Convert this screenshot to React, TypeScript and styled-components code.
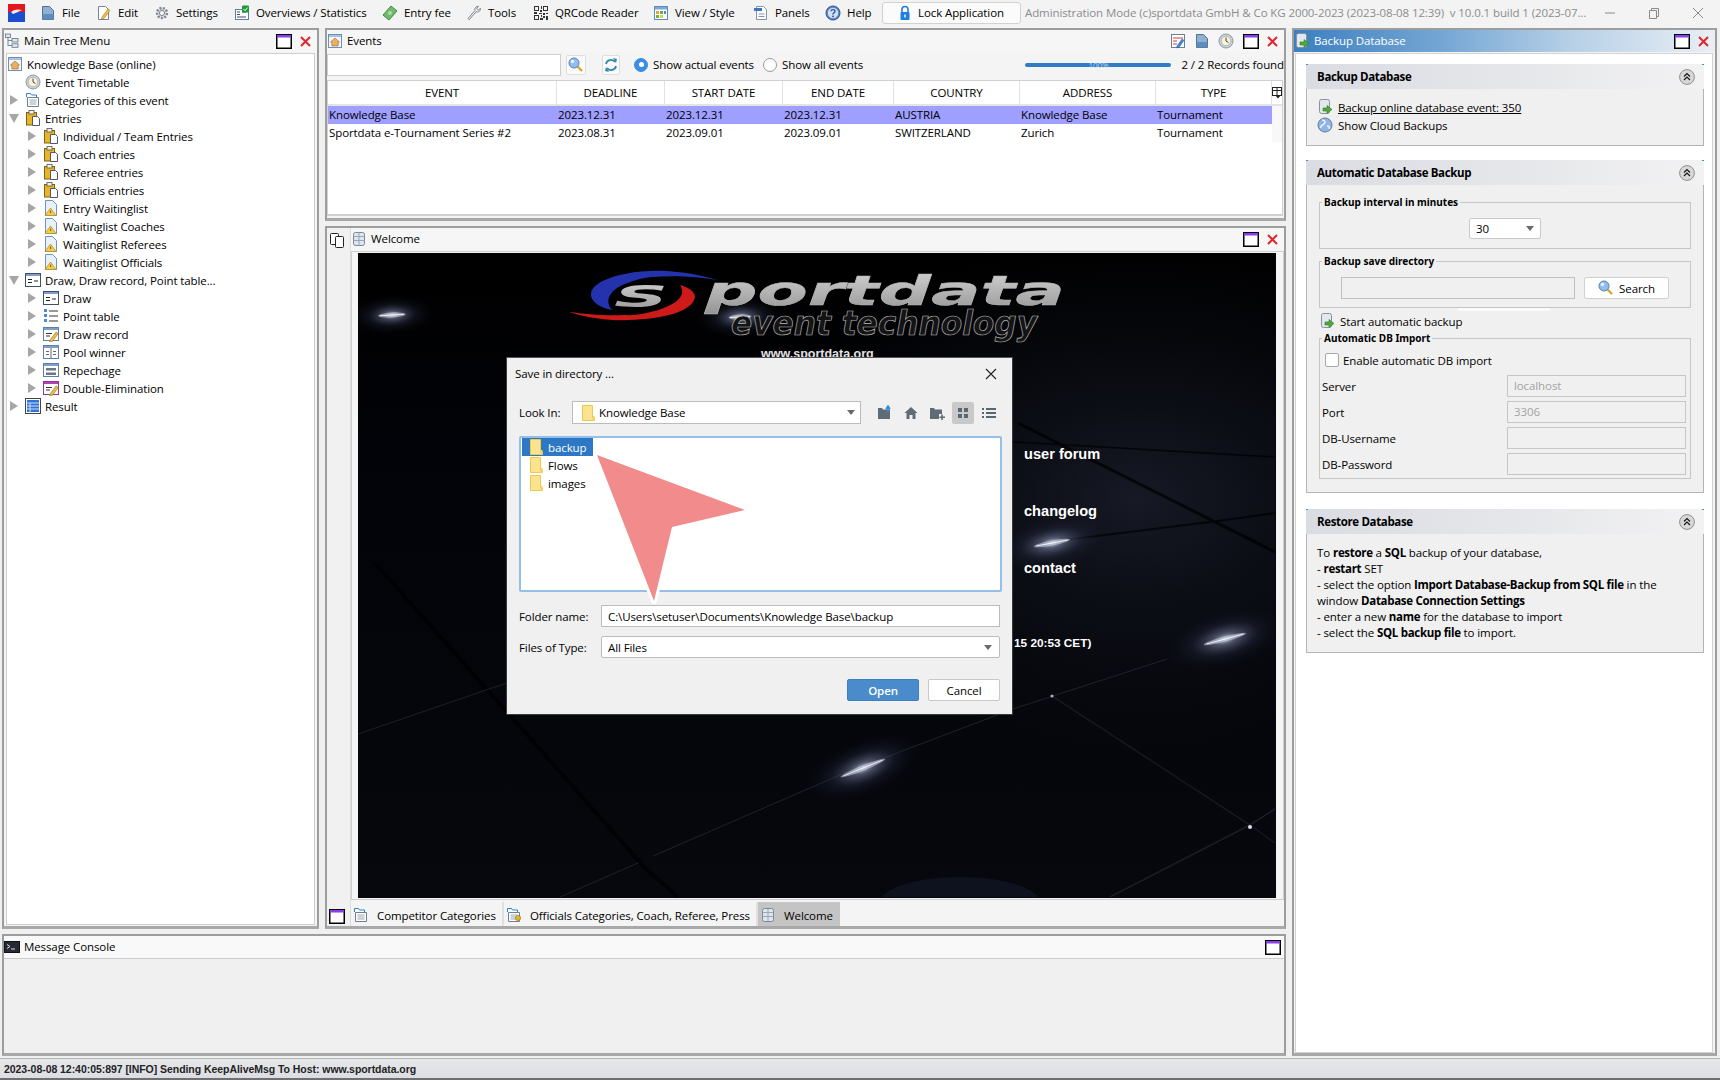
import React from 'react'
import styled, { createGlobalStyle } from 'styled-components'

const GlobalStyle = createGlobalStyle`
  html, body {
    margin: 0;
    padding: 0;
    background: #f0f0f0;
    overflow: hidden;
  }
  * {
    box-sizing: border-box;
  }
  svg {
    display: block;
    flex-shrink: 0;
  }
`

const UI_FONT = `'Open Sans', 'Noto Sans', sans-serif`
const TABLE_COLUMNS = '229px 108px 118px 111px 126px 136px 116px 1fr'

const Page = styled.div`
  position: relative;
  width: 1720px;
  height: 1080px;
  display: flex;
  flex-direction: column;
  background: #f0f0f0;
  font-family: ${UI_FONT};
  font-size: 11.5px;
  letter-spacing: -0.1px;
  color: #000;
  overflow: hidden;
`

/* ---------- top menu ---------- */

const TopBar = styled.div`
  height: 28px;
  flex: none;
  display: flex;
  align-items: center;
  padding: 0 0 3px 8px;
  background: #f3f3f3;
`

const AppMark = styled.div`
  width: 17px;
  margin-right: 15px;
`

const MenuItem = styled.div<{ $w: number }>`
  width: ${p => p.$w}px;
  display: flex;
  align-items: center;
  gap: 6px;
  white-space: nowrap;
`

const LockButton = styled.div`
  width: 139px;
  height: 22px;
  display: flex;
  align-items: center;
  justify-content: center;
  gap: 5px;
  padding-right: 2px;
  background: #fbfbfb;
  border: 1px solid #d2d2d2;
  border-radius: 3px;
`

const AppTitle = styled.div`
  width: 563px;
  margin-left: 4px;
  white-space: nowrap;
  overflow: hidden;
  color: #8c8c8c;
`

const WinControls = styled.div`
  margin-left: auto;
  display: flex;
`

const WinButton = styled.div`
  width: 44px;
  height: 24px;
  display: flex;
  align-items: center;
  justify-content: center;
  color: #8a8a8a;
`

/* ---------- workspace ---------- */

const Workspace = styled.div`
  flex: 1;
  display: grid;
  padding: 0 3px 2px 2px;
  grid-template-columns: 317px 961px 425px;
  grid-template-rows: 193px 703px 122px;
  grid-template-areas:
    'tree events right'
    'tree welcome right'
    'console console right';
  column-gap: 6px;
  row-gap: 5px;
`

const Panel = styled.section<{ $area: string }>`
  grid-area: ${p => p.$area};
  display: flex;
  flex-direction: column;
  min-width: 0;
  min-height: 0;
  border: 1px solid #9d9d9d;
  border-width: 2px 2px 3px 2px;
  border-bottom-color: #a8a8a8;
  background: #f4f4f4;
`

const PanelHead = styled.header<{ $active?: boolean }>`
  height: 22px;
  flex: none;
  display: flex;
  align-items: center;
  gap: 4px;
  padding: 0 6px 0 0;
  background: ${p =>
    p.$active
      ? 'linear-gradient(90deg, #3c7fc0 0%, #74a6d4 35%, #b5cfe6 65%, #e9eff5 100%)'
      : '#f6f6f6'};
  color: ${p => (p.$active ? '#fff' : '#000')};
`

const HeadTitle = styled.span`
  margin-bottom: 2px;
`

const HeadTools = styled.div`
  margin-left: auto;
  display: flex;
  align-items: center;
  gap: 8px;
`

const HeadIconGroup = styled.div`
  display: flex;
  align-items: center;
  gap: 8px;
  margin-right: 1px;
`

const TreeBody = styled.div`
  flex: 1;
  margin: 1px 2px 1px 2px;
  padding-top: 1px;
  background: #fff;
  border: 1px solid #cfcfcf;
`

const TreeRow = styled.div<{ $level: number }>`
  height: 18px;
  display: flex;
  align-items: center;
  padding-left: ${p => (p.$level === 0 ? 0 : 18 * (p.$level - 1))}px;
  white-space: nowrap;
`

const TreeArrowSlot = styled.div`
  width: 18px;
  display: flex;
  justify-content: center;
  padding-right: 5px;
`

const TreeArrow = styled.div<{ $open?: boolean }>`
  width: 0;
  height: 0;
  ${p =>
    p.$open
      ? `border-left: 5px solid transparent;
         border-right: 5px solid transparent;
         border-top: 9px solid #a6a6a6;`
      : `border-top: 5px solid transparent;
         border-bottom: 5px solid transparent;
         border-left: 8px solid #a6a6a6;`}
`

const TreeLabel = styled.span`
  margin-left: 4px;
`

/* ---------- events ---------- */

const FilterBar = styled.div`
  height: 28px;
  flex: none;
  display: flex;
  align-items: center;
  padding: 1px 0 4px 0;
`

const SearchInput = styled.div`
  width: 234px;
  height: 22px;
  background: #fff;
  border: 1px solid #cdcdcd;
`

const IconButton = styled.div<{ $gap: number; $w: number }>`
  width: ${p => p.$w}px;
  height: 20px;
  margin-left: ${p => p.$gap}px;
  display: flex;
  align-items: center;
  justify-content: center;
  background: #fbfbfb;
  border: 1px solid #dedede;
  border-radius: 2px;
`

const RadioLabel = styled.label<{ $w: number; $gap?: number }>`
  width: ${p => p.$w}px;
  margin-left: ${p => p.$gap ?? 0}px;
  display: flex;
  align-items: center;
  gap: 5px;
  white-space: nowrap;
`

const RadioDot = styled.span<{ $on?: boolean }>`
  width: 14px;
  height: 14px;
  flex: none;
  border-radius: 50%;
  display: flex;
  align-items: center;
  justify-content: center;
  background: ${p => (p.$on ? '#3c8ee2' : '#fff')};
  border: 1px solid ${p => (p.$on ? '#3c8ee2' : '#9a9a9a')};
  &::after {
    content: '';
    width: 5px;
    height: 5px;
    border-radius: 50%;
    background: #fff;
    display: ${p => (p.$on ? 'block' : 'none')};
  }
`

const Progress = styled.div`
  width: 146px;
  height: 4px;
  margin-left: auto;
  display: flex;
  align-items: center;
  justify-content: center;
  border-radius: 2px;
  background: #2f7dc6;
  color: #b9d5ee;
  font-size: 8px;
  line-height: 4px;
`

const RecordCount = styled.span`
  margin-left: 10px;
  white-space: nowrap;
`

const TableBox = styled.div`
  flex: 1;
  margin: 0 1px 2px 0;
  background: #fff;
  border: 1px solid #d0d0d0;
  border-bottom-width: 2px;
`

const TableHead = styled.div`
  height: 25px;
  display: grid;
  grid-template-columns: ${TABLE_COLUMNS};
  border-bottom: 2px solid #e4e4e4;
`

const HeadCell = styled.div`
  display: flex;
  align-items: center;
  justify-content: center;
  border-right: 1px solid #e2e2e2;
  &:last-child {
    border-right: 0;
    align-items: flex-start;
    padding-top: 6px;
  }
`

const TableRow = styled.div<{ $selected?: boolean }>`
  height: 18px;
  display: grid;
  grid-template-columns: ${TABLE_COLUMNS};
  align-items: center;
`

const Cell = styled.div<{ $selected?: boolean }>`
  height: 18px;
  line-height: 18px;
  padding-left: 1px;
  white-space: nowrap;
  background: ${p => (p.$selected ? '#9f9fff' : 'transparent')};
  &:last-child {
    background: #f8f8f8;
  }
`

/* ---------- welcome ---------- */

const WelcomeBox = styled.div`
  flex: 1;
  display: flex;
  min-height: 0;
`

const SideStrip = styled.div`
  width: 23px;
  flex: none;
  display: flex;
  flex-direction: column;
  justify-content: space-between;
  align-items: center;
  padding: 4px 3px 2px 0;
  background: #f1f1f1;
`

const WelcomeMain = styled.div`
  flex: 1;
  min-width: 0;
  display: flex;
  flex-direction: column;
  border-left: 1px solid #dcdcdc;
`

const ImageFrame = styled.div`
  flex: 1;
  min-height: 0;
  margin-top: 1px;
  padding: 1px 7px 1px 6px;
  background: #f5f5f5;
  border: 1px solid #cfcfcf;
`

const SplashImage = styled.div`
  position: relative;
  height: 100%;
  padding-top: 16px;
  overflow: hidden;
  background: #05060a;
  color: #fff;
  font-family: 'Liberation Sans', Arial, sans-serif;
  font-weight: bold;
  letter-spacing: 0;
`

const Backdrop = styled.svg`
  position: absolute;
  inset: 0;
`

const LogoHolder = styled.div`
  position: relative;
  height: 78px;
  margin-left: 207px;
`

const SiteLink = styled.div`
  position: relative;
  height: 14px;
  line-height: 14px;
  margin-left: 403px;
  font-size: 12.5px;
  color: #e4e4e4;
`

const LinkColumn = styled.div`
  position: relative;
  margin: 84px 0 0 666px;
  display: flex;
  flex-direction: column;
  gap: 39px;
  font-size: 14.6px;
  line-height: 18px;
`

const BuildNote = styled.div`
  position: relative;
  margin: 58px 0 0 656px;
  font-size: 11.8px;
  line-height: 16px;
`

const TabStrip = styled.div`
  height: 26px;
  flex: none;
  display: flex;
  align-items: center;
  padding-top: 2px;
  background: #f4f4f4;
`

const Tab = styled.div<{ $w: number; $active?: boolean }>`
  width: ${p => p.$w}px;
  height: 24px;
  flex: none;
  display: flex;
  align-items: center;
  gap: 8px;
  padding: 2px 0 0 2px;
  white-space: nowrap;
  background: ${p => (p.$active ? '#c4c4c4' : 'transparent')};
  border-right: ${p => (p.$active ? '0' : '2px solid #e0e0e0')};
`

/* ---------- console ---------- */

const ConsoleBody = styled.div`
  flex: 1;
  background: #f0f0f0;
  border-top: 1px solid #cbcbcb;
`

const ConsoleHead = styled(PanelHead)`
  background: #f9f9f9;
  padding-right: 3px;
`

/* ---------- backup side ---------- */

const BackupBody = styled.div`
  flex: 1;
  margin: 1px 2px 0 1px;
  padding: 10px 8px 0 10px;
  display: flex;
  flex-direction: column;
  background: #fff;
  border: 1px solid #d2d2d2;
`

const Card = styled.div<{ $gap?: number }>`
  margin-top: ${p => p.$gap ?? 0}px;
`

const CardHead = styled.div`
  height: 25px;
  display: flex;
  align-items: center;
  justify-content: space-between;
  padding: 0 9px 0 11px;
  background:
    linear-gradient(#4f86e0, #4f86e0) left top / 2px 1px no-repeat,
    linear-gradient(#4f86e0, #4f86e0) right top / 2px 1px no-repeat,
    linear-gradient(90deg, #dadce3 0%, #e6e7ea 55%, #f2f2f3 100%);
  font-weight: 700;
  letter-spacing: -0.35px;
`

const CardBody = styled.div`
  padding: 10px 12px 13px;
  background: #f0f0f0;
  border: 1px solid #b4b4b4;
  border-top: 0;
`

const CardLinks = styled(CardBody)`
  height: 57px;
  padding: 9px 0 0 10px;
  display: flex;
  flex-direction: column;
`

const LinkRow = styled.div<{ $underline?: boolean }>`
  height: 18px;
  display: flex;
  align-items: center;
  gap: 5px;
  white-space: nowrap;
  text-decoration: ${p => (p.$underline ? 'underline' : 'none')};
`

const Group = styled.fieldset<{ $top: number; $pad: string }>`
  margin: ${p => p.$top}px 0 0;
  padding: ${p => p.$pad};
  min-width: 0;
  border: 1px solid #c6c6c6;
`

const GroupTitle = styled.legend`
  margin-left: 2px;
  padding: 0 2px;
  font-size: 10px;
  line-height: 12px;
  font-weight: 700;
  font-family: 'Noto Sans', sans-serif;
  letter-spacing: 0;
`

const SelectBox = styled.div`
  width: 72px;
  height: 21px;
  margin: 0 auto;
  display: flex;
  align-items: center;
  justify-content: space-between;
  padding: 0 6px;
  background: #fff;
  border: 1px solid #cacaca;
  border-radius: 2px;
`

const DownArrow = styled.span`
  width: 0;
  height: 0;
  border-left: 4px solid transparent;
  border-right: 4px solid transparent;
  border-top: 5px solid #6a6a6a;
`

const DirRow = styled.div`
  display: flex;
  padding-left: 21px;
`

const DirInput = styled.div`
  width: 234px;
  height: 22px;
  background: #f0f0f0;
  border: 1px solid #bfbfbf;
`

const SearchButton = styled.div`
  width: 85px;
  height: 22px;
  margin-left: 9px;
  display: flex;
  align-items: center;
  justify-content: center;
  gap: 5px;
  background: #fff;
  border: 1px solid #d0d0d0;
  border-radius: 2px;
`

const Notch = styled.div`
  width: 92px;
  height: 3px;
  margin-left: 139px;
  background: #fbfbfb;
  border-radius: 0 0 2px 2px;
`

const StartRow = styled.div`
  height: 18px;
  margin: 1px 0 0;
  display: flex;
  align-items: center;
  gap: 5px;
`

const ImportBody = styled.div`
  display: flex;
  flex-direction: column;
  padding: 0 4px 0 2px;
`

const CheckRow = styled.div`
  height: 14px;
  margin: 0 0 8px 3px;
  display: flex;
  align-items: center;
  gap: 4px;
`

const CheckBox = styled.span`
  width: 14px;
  height: 14px;
  background: #fff;
  border: 1px solid #a9a9a9;
  border-radius: 2px;
`

const FieldRow = styled.div`
  height: 22px;
  margin-bottom: 4px;
  display: flex;
  align-items: center;
  justify-content: space-between;
  &:last-child {
    margin-bottom: 0;
  }
`

const DisabledField = styled.div`
  width: 179px;
  height: 22px;
  padding-left: 6px;
  line-height: 20px;
  color: #a3a3a3;
  background: #f0f0f0;
  border: 1px solid #c6c6c6;
`

const HelpText = styled.div`
  padding: 11px 8px 11px 10px;
  line-height: 16px;
  background: #f0f0f0;
  border: 1px solid #b4b4b4;
  border-top: 0;
  b {
    font-weight: 700;
    letter-spacing: -0.3px;
  }
`

/* ---------- status ---------- */

const StatusBar = styled.footer`
  height: 22px;
  flex: none;
  display: flex;
  align-items: center;
  padding: 0 4px;
  border-top: 1px solid #b5b5b5;
  border-bottom: 2px solid #6f6f6f;
  background: linear-gradient(180deg, #e6e7ea, #dcdee3);
  font-family: 'Liberation Sans', Arial, sans-serif;
  font-size: 10.5px;
  font-weight: 700;
  letter-spacing: -0.05px;
  color: #222;
`

/* ---------- dialog ---------- */

const Dialog = styled.div`
  position: absolute;
  left: 506px;
  top: 357px;
  width: 507px;
  height: 358px;
  padding: 0 12px;
  display: flex;
  flex-direction: column;
  background: #f0f0f0;
  border: 1px solid #3a3a3a;
  border-top-color: #555;
`

const DialogTitle = styled.div`
  height: 31px;
  display: flex;
  align-items: center;
  justify-content: space-between;
  margin: 0 3px 0 -4px;
`

const LookRow = styled.div`
  height: 23px;
  margin-top: 12px;
  display: flex;
  align-items: center;
`

const DialogLabel = styled.span<{ $w: number }>`
  width: ${p => p.$w}px;
  flex: none;
`

const LookCombo = styled.div`
  width: 289px;
  height: 23px;
  padding: 0 5px 0 9px;
  display: flex;
  align-items: center;
  gap: 4px;
  background: #fff;
  border: 1px solid #bcbcbc;
`

const ComboArrow = styled(DownArrow)`
  margin-left: auto;
`

const DialogTools = styled.div`
  margin-left: 13px;
  display: flex;
  align-items: center;
  gap: 4px;
`

const DialogTool = styled.div<{ $active?: boolean }>`
  width: 22px;
  height: 22px;
  display: flex;
  align-items: center;
  justify-content: center;
  border-radius: 2px;
  background: ${p => (p.$active ? '#c9c9c9' : 'transparent')};
`

const FileList = styled.div`
  width: 483px;
  height: 156px;
  margin-top: 12px;
  padding: 0 1px;
  background: #fff;
  border: 2px solid #93bfe9;
  border-radius: 2px;
`

const FileRow = styled.div<{ $selected?: boolean }>`
  width: 71px;
  height: 18px;
  display: flex;
  align-items: center;
  gap: 5px;
  padding-left: 8px;
  color: ${p => (p.$selected ? '#fff' : '#000')};
  background: ${p => (p.$selected ? '#2d78c4' : 'transparent')};
`

const FormRow = styled.div<{ $top: number }>`
  height: 22px;
  margin-top: ${p => p.$top}px;
  display: flex;
  align-items: center;
`

const FormInput = styled.div<{ $round?: boolean }>`
  width: 399px;
  height: 22px;
  padding: 0 7px 0 6px;
  display: flex;
  align-items: center;
  justify-content: space-between;
  background: #fff;
  border: 1px solid #bcbcbc;
  border-radius: ${p => (p.$round ? '2px' : '0')};
`

const DialogActions = styled.div`
  margin-top: 21px;
  display: flex;
  justify-content: flex-end;
  gap: 9px;
`

const DialogButton = styled.div<{ $primary?: boolean }>`
  width: 72px;
  height: 22px;
  display: flex;
  align-items: center;
  justify-content: center;
  border-radius: 2px;
  background: ${p => (p.$primary ? '#4a8bcb' : '#fff')};
  color: ${p => (p.$primary ? '#fff' : '#000')};
  border: 1px solid ${p => (p.$primary ? '#3d7fc0' : '#c8c8c8')};
  font-weight: ${p => (p.$primary ? 600 : 400)};
`

const Pointer = styled.svg`
  position: absolute;
  left: 585px;
  top: 445px;
`

/* ---------- icons ---------- */

type IconProps = { children?: React.ReactNode; w?: number; h?: number }

const Ico = ({ children, w = 16, h = 16 }: IconProps) => (
  <svg width={w} height={h} viewBox={`0 0 ${w} ${h}`}>
    {children}
  </svg>
)

const AppLogoIcon = () => (
  <Ico w={17} h={19}>
    <rect width="17" height="9" y="1" fill="#e3161b" />
    <rect width="17" height="10" y="9" fill="#1b4fd0" />
    <path d="M3 9c3-3 8-3 11-2-3 1-5 3-9 4z" fill="#fff" opacity=".9" />
  </Ico>
)

const DocBlueIcon = () => (
  <Ico>
    <path d="M2.5 1.5h7l4 4v9h-11z" fill="#8fb0d2" stroke="#55708f" />
    <rect x="2.5" y="9" width="11" height="5.5" fill="#5e8cbc" />
  </Ico>
)

const DocPenIcon = () => (
  <Ico>
    <path d="M2.5 1.5h7l3 3v10h-10z" fill="#fff" stroke="#6f84a0" />
    <path d="M6 12l6-8 2 1.5-6 8-2.5.8z" fill="#f0c040" stroke="#a07820" strokeWidth=".6" />
  </Ico>
)

const GearIcon = () => (
  <Ico>
    <circle cx="8" cy="8" r="5" fill="#d8dde2" stroke="#7f8890" strokeWidth="2.4" strokeDasharray="2 1.4" />
    <circle cx="8" cy="8" r="2.6" fill="#f4f4f4" stroke="#7f8890" />
  </Ico>
)

const OverviewIcon = () => (
  <Ico>
    <rect x="1.5" y="4.5" width="13" height="10" fill="#fff" stroke="#5b7fa8" />
    <path d="M3 7h3M3 9.5h3M3 12h9M8 7h4" stroke="#446" />
    <rect x="8" y="0.5" width="7" height="7" rx="1" fill="#1e9a3a" />
    <path d="M9.5 4l1.6 1.6 2.5-3" stroke="#fff" fill="none" />
  </Ico>
)

const MoneyIcon = () => (
  <Ico>
    <path d="M1 10l8-9 6 5-8 9z" fill="#6fbb6a" stroke="#3f8a40" />
    <circle cx="8" cy="8" r="2" fill="#a9dca4" />
  </Ico>
)

const WrenchIcon = () => (
  <Ico>
    <path d="M2 13.5l7-8c-.8-2 .6-4.2 3.4-4.3l-1.7 2.3 1.6 1.5 2.2-1.6c.1 2.7-2.2 4.2-4.3 3.3l-7 8z" fill="#f2f2f2" stroke="#7a838d" />
  </Ico>
)

const QrIcon = () => (
  <Ico>
    <path d="M1 1h5v5H1zM2 2v3h3V2zM10 1h5v5h-5zM11 2v3h3V2zM1 10h5v5H1zM2 11v3h3v-3zM8 1h1v3H8zM7 5h2v2H7zM1 7h3v2H1zM6 8h3v1H6zM10 8h2v2h-2zM13 8h2v1h-2zM8 10h1v2H8zM10 11h2v2h-2zM13 11h2v4h-2zM7 13h3v2H7z" fill="#333" fillRule="evenodd" />
  </Ico>
)

const ViewIcon = () => (
  <Ico>
    <rect x="1.5" y="1.5" width="13" height="13" fill="#fff" stroke="#5f8ac0" />
    <rect x="2" y="2" width="12" height="2.5" fill="#7fa9d8" />
    <rect x="3" y="6" width="3" height="3" fill="#e8a23c" />
    <rect x="7" y="6" width="3" height="3" fill="#6bb34a" />
    <rect x="11" y="6" width="2" height="3" fill="#4a8bd0" />
    <rect x="3" y="10" width="3" height="3" fill="#6bb34a" />
    <rect x="7" y="10" width="3" height="3" fill="#e8d03c" />
  </Ico>
)

const PanelsIcon = () => (
  <Ico>
    <path d="M3.5 1.5h7l3 3v10h-10z" fill="#fff" stroke="#8494a8" />
    <rect x="1" y="3" width="8" height="3" fill="#3f78b8" />
    <path d="M5.5 9h6M5.5 11.5h6" stroke="#8494a8" />
  </Ico>
)

const HelpIcon = () => (
  <Ico>
    <circle cx="8" cy="8" r="7" fill="#5b86c8" stroke="#2f4f86" />
    <circle cx="8" cy="8" r="5.2" fill="#cfe0f5" />
    <path d="M6 6.3c.2-2.3 4.2-2.3 4 0 0 1.6-2 1.4-2 3.2" stroke="#2f4f9a" strokeWidth="1.4" fill="none" />
    <rect x="7.2" y="10.6" width="1.6" height="1.6" fill="#2f4f9a" />
  </Ico>
)

const LockIcon = () => (
  <Ico>
    <path d="M5 7V4.5a3 3 0 0 1 6 0V7" fill="none" stroke="#1f7fe0" strokeWidth="1.6" />
    <rect x="3.5" y="7" width="9" height="8" rx="1" fill="#1f7fe0" />
    <rect x="7.3" y="9.5" width="1.4" height="3" fill="#fff" />
  </Ico>
)

const TreeMenuIcon = () => (
  <Ico>
    <path d="M4 3v10M4 7.5h4M4 12.5h4" stroke="#7b8794" fill="none" />
    <rect x="1.5" y="1" width="5" height="3.5" fill="#dfe7ef" stroke="#5f7388" strokeWidth=".8" />
    <rect x="8" y="5.5" width="6" height="3.5" fill="#dfe7ef" stroke="#5f7388" strokeWidth=".8" />
    <rect x="8" y="10.8" width="6" height="3.5" fill="#dfe7ef" stroke="#5f7388" strokeWidth=".8" />
  </Ico>
)

const HomeIcon = () => (
  <Ico>
    <rect x="1.5" y="1.5" width="13" height="13" fill="#f4f7fa" stroke="#6d90b8" />
    <rect x="2" y="2" width="12" height="2" fill="#a9c2de" />
    <path d="M3.5 9L8 5l4.5 4h-1.3v4H4.8V9z" fill="#e8b060" stroke="#9a6a30" strokeWidth=".6" />
  </Ico>
)

const ClockIcon = () => (
  <Ico>
    <circle cx="8" cy="8" r="7" fill="#c9d2e0" stroke="#8a99ae" />
    <circle cx="8" cy="8" r="4.8" fill="#f8f3da" stroke="#a09a78" strokeWidth=".6" />
    <path d="M8 4.5V8l2.5 1.5" stroke="#445" fill="none" />
  </Ico>
)

const FolderDocIcon = ({ badge }: { badge?: boolean }) => (
  <Ico>
    <path d="M1.5 5V1.5h4l1 1.5h5v2" fill="#fff" stroke="#2a80d0" />
    <path d="M2.5 5.5h11v9h-11z" fill="#fff" stroke="#6c7f94" />
    <path d="M4.5 8h7M4.5 10h7M4.5 12h7" stroke="#9aa6b4" />
    {badge && <circle cx="12" cy="11" r="2.6" fill="#e6b820" stroke="#8f6d10" strokeWidth=".6" />}
  </Ico>
)

const ClipIcon = () => (
  <Ico>
    <rect x="1.5" y="2.5" width="10" height="12.5" fill="#e6b52c" stroke="#7f6215" />
    <rect x="4" y="0.5" width="5" height="3.5" fill="#f4f0e0" stroke="#555" strokeWidth=".8" />
    <path d="M7.5 6.5h5l2 2v7h-7z" fill="#fff" stroke="#556" />
  </Ico>
)

const WaitIcon = () => (
  <Ico>
    <path d="M2.5 0.5h7l4 4v11h-11z" fill="#e8f0fa" stroke="#6f93bf" />
    <path d="M7.5 8l5.5 7.5H2z" fill="#f3cd4a" stroke="#b58c18" strokeWidth=".7" />
    <rect x="7.1" y="10.5" width="1" height="2.6" fill="#7a5c10" />
  </Ico>
)

const WinBase = ({ bar = '#7f9fc8', line = '#5a7fb0', children }: { bar?: string; line?: string; children?: React.ReactNode }) => (
  <Ico>
    <rect x="0.5" y="1.5" width="15" height="13" fill="#fff" stroke={line} />
    <rect x="1" y="2" width="14" height="2" fill={bar} />
    {children}
  </Ico>
)

const DrawIcon = () => (
  <WinBase line="#3f4f66">
    <path d="M3 7.5h4M3 10.5h4M9 9h4" stroke="#222" />
  </WinBase>
)

const PointIcon = () => (
  <Ico>
    <path d="M6 3h9M6 8h9M6 13h9" stroke="#333" />
    <path d="M1 1h3v3H1zM1 6h3v3H1zM1 11h3v3H1z" fill="#4c8ad8" />
  </Ico>
)

const PencilMark = () => <path d="M7 14l6-8 2.2 1.6-6 8-2.6.6z" fill="#efbd45" stroke="#8f6a18" strokeWidth=".6" />

const RecordIcon = () => (
  <WinBase>
    <path d="M3 7.5h6M3 10h4" stroke="#333" />
    <PencilMark />
  </WinBase>
)

const PoolIcon = () => (
  <WinBase>
    <path d="M8 4v10M3 7.5h3M10 7.5h3M3 10.5h3M10 10.5h3" stroke="#667" />
  </WinBase>
)

const RepechageIcon = () => (
  <WinBase>
    <rect x="3" y="6" width="10" height="2.5" fill="#6b7686" />
    <rect x="3" y="10.5" width="10" height="2.5" fill="#6b7686" />
  </WinBase>
)

const DoubleIcon = () => (
  <WinBase bar="#b042b8" line="#8a3a90">
    <path d="M3 7.5h6M3 10h4" stroke="#333" />
    <PencilMark />
  </WinBase>
)

const ResultIcon = () => (
  <Ico>
    <rect x="0.5" y="0.5" width="15" height="15" fill="#fff" stroke="#444" />
    <rect x="2" y="2" width="12" height="12" fill="#2f72d8" />
    <path d="M2 5h12M2 8h12M2 11h12M5 5v9" stroke="#cfe0fa" />
  </Ico>
)

const MaxIcon = () => (
  <Ico w={16} h={15}>
    <rect x="0.75" y="0.75" width="14.5" height="13.5" fill="#fff" stroke="#000" strokeWidth="1.5" />
    <rect x="1" y="1" width="14" height="2.5" fill="#8a3df0" />
  </Ico>
)

const CloseIcon = () => (
  <Ico w={11} h={11}>
    <path d="M1 1l9 9M10 1l-9 9" stroke="#e3262b" strokeWidth="2" />
  </Ico>
)

const LensIcon = () => (
  <Ico>
    <path d="M9 9l5 5" stroke="#d9a62e" strokeWidth="2.4" />
    <circle cx="6" cy="6" r="5" fill="#8fbdf0" stroke="#5f80a8" />
    <circle cx="4.5" cy="4.5" r="1.8" fill="#e7f2ff" />
  </Ico>
)

const RefreshIcon = () => (
  <Ico>
    <path d="M3 7a5 5 0 0 1 9-2M13 9a5 5 0 0 1-9 2" fill="none" stroke="#2b8aa8" strokeWidth="1.8" />
    <path d="M10 1l4 1-1 4zM6 15l-4-1 1-4z" fill="#2b8aa8" />
  </Ico>
)

const CalEditIcon = () => (
  <Ico>
    <rect x="1.5" y="1.5" width="13" height="13" fill="#fff" stroke="#6d7f96" />
    <path d="M3 5h10M3 8h4M3 11h4" stroke="#d03a3a" />
    <path d="M7 13l5-7 2 1.4-5 7-2.4.5z" fill="#3f8ad8" stroke="#1f5a9a" strokeWidth=".5" />
  </Ico>
)

const DbIcon = () => (
  <Ico>
    <rect x="2.5" y="1.5" width="11" height="13" rx="2" fill="#dfe5ec" stroke="#7b8794" />
    <path d="M2.5 5.5h11M2.5 9.5h11M8 1.5v13" stroke="#9aa6b4" />
  </Ico>
)

const CopyIcon = () => (
  <Ico>
    <rect x="1.5" y="1.5" width="8" height="11" rx="1" fill="#fff" stroke="#222" />
    <rect x="6.5" y="4.5" width="8" height="11" rx="1" fill="#fff" stroke="#222" />
  </Ico>
)

const BackupIcon = () => (
  <Ico>
    <rect x="2.5" y="0.5" width="10" height="14" rx="2" fill="#e3e8ee" stroke="#8793a2" />
    <path d="M6 9h4V6.5l5 4-5 4V12H6z" fill="#4fa83c" stroke="#2f7a20" strokeWidth=".6" />
  </Ico>
)

const GlobeIcon = () => (
  <Ico>
    <circle cx="8" cy="8" r="7" fill="#8fb4e6" stroke="#667d9c" />
    <path d="M5 3c3 0 4 2 2 4S3 8 4 11M10 9c2 0 3 1 2 3" stroke="#eef4fb" strokeWidth="1.5" fill="none" />
  </Ico>
)

const TerminalIcon = () => (
  <Ico>
    <rect x="0.5" y="2.5" width="15" height="11" fill="#252a33" stroke="#111" />
    <path d="M3 5.5l3 2-3 2M7 10h4" stroke="#dde" fill="none" />
  </Ico>
)

const CollapseIcon = () => (
  <Ico>
    <circle cx="8" cy="8" r="7.4" fill="#d8d8d8" stroke="#8e8e8e" />
    <path d="M5 7.5l3-3 3 3M5 11l3-3 3 3" stroke="#111" fill="none" strokeWidth="1.1" />
  </Ico>
)

const ColumnsIcon = () => (
  <Ico w={11} h={12}>
    <rect x="0.5" y="0.5" width="9" height="8" fill="#fff" stroke="#222" />
    <path d="M.5 3.5h9M5 .5v8" stroke="#222" />
    <path d="M3 8h6l-3 3.5z" fill="#222" />
  </Ico>
)

const FolderIcon = () => (
  <Ico w={13} h={16}>
    <path d="M.5.5h10v12.5h2v2.5H.5z" fill="#fbe38f" stroke="#ecc84d" />
    <rect x="10.5" y="11" width="2" height="4.5" fill="#f5d265" />
  </Ico>
)

const UpFolderIcon = () => (
  <Ico>
    <path d="M1 3h4l1 1.5h7V14H1z" fill="#5f6b75" />
    <path d="M11 7V2M9 4l2-3 2 3" stroke="#2f8ee0" strokeWidth="1.6" fill="none" />
  </Ico>
)

const SmallHomeIcon = () => (
  <Ico>
    <path d="M8 2l6.5 6H12.500v6H9.500v-4h-3v4h-3V8H1.500z" fill="#5f6b75" />
  </Ico>
)

const NewFolderIcon = () => (
  <Ico>
    <path d="M1 3h4l1 1.500h7V9h-3v5H1z" fill="#5f6b75" />
    <path d="M13 9.500v5.500M10.500 12.300h5.500" stroke="#5f6b75" strokeWidth="1.600" />
  </Ico>
)

const GridIcon = () => (
  <Ico w={12} h={12}>
    <path d="M1 1h4v4H1zM7 1h4v4H7zM1 7h4v4H1zM7 7h4v4H7z" fill="#5a6670" />
  </Ico>
)

const ListIcon = () => (
  <Ico w={14} h={12}>
    <path d="M0 1h2v2H0zM4 1h10v2H4zM0 5h2v2H0zM4 5h10v2H4zM0 9h2v2H0zM4 9h10v2H4z" fill="#5a6670" />
  </Ico>
)

const CrossIcon = () => (
  <Ico w={12} h={12}>
    <path d="M1 1l10 10M11 1L1 11" stroke="#222" strokeWidth="1.1" />
  </Ico>
)

const MinimizeIcon = () => (
  <Ico w={12} h={12}>
    <path d="M1 6h10" stroke="#8a8a8a" />
  </Ico>
)

const RestoreIcon = () => (
  <Ico w={12} h={12}>
    <path d="M1.500 3.500h7v8h-7zM3.500 3.500v-2h7v8h-2" stroke="#8a8a8a" fill="none" />
  </Ico>
)

const WinCloseIcon = () => (
  <Ico w={12} h={12}>
    <path d="M1 1l10 10M11 1L1 11" stroke="#8a8a8a" />
  </Ico>
)

/* ---------- drawings ---------- */

type LightProps = { x: number; y: number; r?: number; len?: number; angle?: number }

const Light = ({ x, y, r = 52, len = 16, angle = -12 }: LightProps) => (
  <g transform={`rotate(${angle} ${x} ${y})`}>
    <ellipse cx={x} cy={y} rx={r} ry={r * 0.45} fill="url(#glow)" />
    <ellipse cx={x} cy={y} rx={len * 1.15} ry="2.6" fill="#cfd4e8" opacity=".55" />
    <path d={`M${x - len} ${y}h${len * 2}`} stroke="#fff" strokeWidth="1" opacity=".85" />
  </g>
)

const SplashBackdrop = () => (
  <Backdrop width="917" height="644" viewBox="0 0 917 644">
    <defs>
      <radialGradient id="glow">
        <stop offset="0" stopColor="#dfe3f0" stopOpacity=".9" />
        <stop offset=".2" stopColor="#8088aa" stopOpacity=".55" />
        <stop offset=".55" stopColor="#333a58" stopOpacity=".25" />
        <stop offset="1" stopColor="#10131f" stopOpacity="0" />
      </radialGradient>
      <linearGradient id="floor" x1="0" y1="0" x2="0" y2="1">
        <stop offset="0" stopColor="#000" />
        <stop offset=".3" stopColor="#020308" />
        <stop offset="1" stopColor="#07080e" />
      </linearGradient>
      <radialGradient id="wash" cx=".85" cy=".38" r=".42">
        <stop offset="0" stopColor="#1a1e2a" stopOpacity=".85" />
        <stop offset="1" stopColor="#0a0c12" stopOpacity="0" />
      </radialGradient>
    </defs>
    <rect width="917" height="644" fill="url(#floor)" />
    <rect width="917" height="644" fill="url(#wash)" />
    <g fill="none" opacity=".7">
      <path d="M660 170L917 299" stroke="#000" strokeWidth="3" />
      <path d="M642 188L917 204" stroke="#000" strokeWidth="1.6" />
      <path d="M682 290L852 269L917 260" stroke="#000" strokeWidth="2" />
      <path d="M17 310L287 615L320 644" stroke="#000" strokeWidth="4" />
    </g>
    <g fill="none">
      <path d="M0 481L131 436L260 392" stroke="#1d2029" />
      <path d="M202 644L280 610M295 603L489 519L655 456L809 406" stroke="#1f222b" />
      <path d="M694 443L892 572L917 590" stroke="#16181f" strokeWidth="1.5" />
      <path d="M752 644L892 572L917 556" stroke="#1a1d25" strokeWidth="1.5" />
    </g>
    <Light x={34} y={62} r={44} len={12} angle={-3} />
    <Light x={382} y={64} r={46} len={10} angle={-3} />
    <Light x={694} y={290} r={58} len={16} angle={-11} />
    <Light x={867} y={386} r={62} len={19} angle={-15} />
    <Light x={505} y={515} r={62} len={21} angle={-22} />
    <ellipse cx="602" cy="650" rx="80" ry="26" fill="#1a2338" opacity=".4" />
    <circle cx="694" cy="443" r="1.600" fill="#aab" />
    <circle cx="892" cy="574" r="2" fill="#dde" />
  </Backdrop>
)

const LOGO_FONT = `'DejaVu Sans', sans-serif`

const SportdataLogo = () => (
  <svg width="510" height="78" viewBox="0 0 510 78" overflow="visible">
    <defs>
      <linearGradient id="word" x1="0" y1="0" x2="0" y2="1">
        <stop offset="0" stopColor="#d4d4d4" />
        <stop offset="1" stopColor="#959595" />
      </linearGradient>
    </defs>
    <path d="M153 11C125 3 100 1 85 2 55 3 28 12 26 24c-1 9 10 15 21 17-6-7-5-15 5-22 10-6 23-10 36-11 22-2 47 0 65 3z" fill="#2433ad" />
    <path d="M4 43c21 7 46 9 59 8 37-1 65-9 67-23 0-6-8-10-15-12 4 6 3 12-6 18-14 9-39 13-50 12-19 1-39-1-55-3z" fill="#cf1a1a" />
    <text
      x="49"
      y="38"
      fontFamily={LOGO_FONT}
      fontSize="31"
      fontStyle="italic"
      fontWeight="700"
      fill="url(#word)"
      textLength="54"
      lengthAdjust="spacingAndGlyphs"
    >
      S
    </text>
    <text
      x="140"
      y="36"
      fontFamily={LOGO_FONT}
      fontSize="40"
      fontStyle="italic"
      fill="url(#word)"
      stroke="#b4b4b4"
      strokeWidth=".5"
      textLength="360"
      lengthAdjust="spacingAndGlyphs"
    >
      portdata
    </text>
    <text
      x="166"
      y="66"
      fontFamily={LOGO_FONT}
      fontSize="33"
      fontStyle="italic"
      fill="#141414"
      stroke="#b8b8b8"
      strokeWidth=".7"
      textLength="306"
      lengthAdjust="spacingAndGlyphs"
    >
      event technology
    </text>
  </svg>
)

/* ---------- data ---------- */

const MENU = [
  { label: 'File', w: 56, icon: <DocBlueIcon /> },
  { label: 'Edit', w: 58, icon: <DocPenIcon /> },
  { label: 'Settings', w: 80, icon: <GearIcon /> },
  { label: 'Overviews / Statistics', w: 148, icon: <OverviewIcon /> },
  { label: 'Entry fee', w: 84, icon: <MoneyIcon /> },
  { label: 'Tools', w: 67, icon: <WrenchIcon /> },
  { label: 'QRCode Reader', w: 120, icon: <QrIcon /> },
  { label: 'View / Style', w: 100, icon: <ViewIcon /> },
  { label: 'Panels', w: 72, icon: <PanelsIcon /> },
  { label: 'Help', w: 57, icon: <HelpIcon /> },
]

type TreeEntry = { label: string; level: number; arrow?: 'open' | 'closed'; icon: React.ReactNode }

const TREE: TreeEntry[] = [
  { label: 'Knowledge Base (online)', level: 0, icon: <HomeIcon /> },
  { label: 'Event Timetable', level: 1, icon: <ClockIcon /> },
  { label: 'Categories of this event', level: 1, arrow: 'closed', icon: <FolderDocIcon /> },
  { label: 'Entries', level: 1, arrow: 'open', icon: <ClipIcon /> },
  { label: 'Individual / Team Entries', level: 2, arrow: 'closed', icon: <ClipIcon /> },
  { label: 'Coach entries', level: 2, arrow: 'closed', icon: <ClipIcon /> },
  { label: 'Referee entries', level: 2, arrow: 'closed', icon: <ClipIcon /> },
  { label: 'Officials entries', level: 2, arrow: 'closed', icon: <ClipIcon /> },
  { label: 'Entry Waitinglist', level: 2, arrow: 'closed', icon: <WaitIcon /> },
  { label: 'Waitinglist Coaches', level: 2, arrow: 'closed', icon: <WaitIcon /> },
  { label: 'Waitinglist Referees', level: 2, arrow: 'closed', icon: <WaitIcon /> },
  { label: 'Waitinglist Officials', level: 2, arrow: 'closed', icon: <WaitIcon /> },
  { label: 'Draw, Draw record, Point table...', level: 1, arrow: 'open', icon: <DrawIcon /> },
  { label: 'Draw', level: 2, arrow: 'closed', icon: <DrawIcon /> },
  { label: 'Point table', level: 2, arrow: 'closed', icon: <PointIcon /> },
  { label: 'Draw record', level: 2, arrow: 'closed', icon: <RecordIcon /> },
  { label: 'Pool winner', level: 2, arrow: 'closed', icon: <PoolIcon /> },
  { label: 'Repechage', level: 2, arrow: 'closed', icon: <RepechageIcon /> },
  { label: 'Double-Elimination', level: 2, arrow: 'closed', icon: <DoubleIcon /> },
  { label: 'Result', level: 1, arrow: 'closed', icon: <ResultIcon /> },
]

const COLUMNS = ['EVENT', 'DEADLINE', 'START DATE', 'END DATE', 'COUNTRY', 'ADDRESS', 'TYPE']

const EVENTS = [
  ['Knowledge Base', '2023.12.31', '2023.12.31', '2023.12.31', 'AUSTRIA', 'Knowledge Base', 'Tournament'],
  ['Sportdata e-Tournament Series #2', '2023.08.31', '2023.09.01', '2023.09.01', 'SWITZERLAND', 'Zurich', 'Tournament'],
]

const DB_FIELDS = [
  { label: 'Server', value: 'localhost' },
  { label: 'Port', value: '3306' },
  { label: 'DB-Username', value: '' },
  { label: 'DB-Password', value: '' },
]

/* ---------- page ---------- */

export default function App() {
  return (
    <Page>
      <GlobalStyle />

      <TopBar>
        <AppMark>
          <AppLogoIcon />
        </AppMark>
        {MENU.map(item => (
          <MenuItem key={item.label} $w={item.w}>
            {item.icon}
            <span>{item.label}</span>
          </MenuItem>
        ))}
        <LockButton>
          <LockIcon />
          <span>Lock Application</span>
        </LockButton>
        <AppTitle>
          Administration Mode (c)sportdata GmbH &amp; Co KG 2000-2023 (2023-08-08 12:39)&nbsp; v 10.0.1 build 1 (2023-07...
        </AppTitle>
        <WinControls>
          <WinButton>
            <MinimizeIcon />
          </WinButton>
          <WinButton>
            <RestoreIcon />
          </WinButton>
          <WinButton>
            <WinCloseIcon />
          </WinButton>
        </WinControls>
      </TopBar>

      <Workspace>
        <Panel $area="tree">
          <PanelHead>
            <TreeMenuIcon />
            <HeadTitle>Main Tree Menu</HeadTitle>
            <HeadTools>
              <MaxIcon />
              <CloseIcon />
            </HeadTools>
          </PanelHead>
          <TreeBody>
            {TREE.map(entry => (
              <TreeRow key={entry.label} $level={entry.level}>
                {entry.level > 0 && (
                  <TreeArrowSlot>{entry.arrow && <TreeArrow $open={entry.arrow === 'open'} />}</TreeArrowSlot>
                )}
                {entry.icon}
                <TreeLabel>{entry.label}</TreeLabel>
              </TreeRow>
            ))}
          </TreeBody>
        </Panel>

        <Panel $area="events">
          <PanelHead>
            <HomeIcon />
            <HeadTitle>Events</HeadTitle>
            <HeadTools>
              <HeadIconGroup>
                <CalEditIcon />
                <DocBlueIcon />
                <ClockIcon />
              </HeadIconGroup>
              <MaxIcon />
              <CloseIcon />
            </HeadTools>
          </PanelHead>
          <FilterBar>
            <SearchInput />
            <IconButton $gap={5} $w={20}>
              <LensIcon />
            </IconButton>
            <IconButton $gap={16} $w={18}>
              <RefreshIcon />
            </IconButton>
            <RadioLabel $w={129} $gap={14}>
              <RadioDot $on />
              Show actual events
            </RadioLabel>
            <RadioLabel $w={120}>
              <RadioDot />
              Show all events
            </RadioLabel>
            <Progress>100%</Progress>
            <RecordCount>2 / 2 Records found</RecordCount>
          </FilterBar>
          <TableBox>
            <TableHead>
              {COLUMNS.map(name => (
                <HeadCell key={name}>{name}</HeadCell>
              ))}
              <HeadCell>
                <ColumnsIcon />
              </HeadCell>
            </TableHead>
            {EVENTS.map((row, index) => (
              <TableRow key={row[0]}>
                {row.map((value, col) => (
                  <Cell key={col} $selected={index === 0}>
                    {value}
                  </Cell>
                ))}
                <Cell />
              </TableRow>
            ))}
          </TableBox>
        </Panel>

        <Panel $area="welcome">
          <WelcomeBox>
            <SideStrip>
              <CopyIcon />
              <MaxIcon />
            </SideStrip>
            <WelcomeMain>
              <PanelHead>
                <DbIcon />
                <HeadTitle>Welcome</HeadTitle>
                <HeadTools>
                  <MaxIcon />
                  <CloseIcon />
                </HeadTools>
              </PanelHead>
              <ImageFrame>
                <SplashImage>
                  <SplashBackdrop />
                  <LogoHolder>
                    <SportdataLogo />
                  </LogoHolder>
                  <SiteLink>www.sportdata.org</SiteLink>
                  <LinkColumn>
                    <span>user forum</span>
                    <span>changelog</span>
                    <span>contact</span>
                  </LinkColumn>
                  <BuildNote>15 20:53 CET)</BuildNote>
                </SplashImage>
              </ImageFrame>
              <TabStrip>
                <Tab $w={153}>
                  <FolderDocIcon />
                  Competitor Categories
                </Tab>
                <Tab $w={254}>
                  <FolderDocIcon badge />
                  Officials Categories, Coach, Referee, Press
                </Tab>
                <Tab $w={82} $active>
                  <DbIcon />
                  Welcome
                </Tab>
              </TabStrip>
            </WelcomeMain>
          </WelcomeBox>
        </Panel>

        <Panel $area="console">
          <ConsoleHead>
            <TerminalIcon />
            <HeadTitle>Message Console</HeadTitle>
            <HeadTools>
              <MaxIcon />
            </HeadTools>
          </ConsoleHead>
          <ConsoleBody />
        </Panel>

        <Panel $area="right">
          <PanelHead $active>
            <BackupIcon />
            <HeadTitle>Backup Database</HeadTitle>
            <HeadTools>
              <MaxIcon />
              <CloseIcon />
            </HeadTools>
          </PanelHead>
          <BackupBody>
            <Card>
              <CardHead>
                Backup Database
                <CollapseIcon />
              </CardHead>
              <CardLinks>
                <LinkRow $underline>
                  <BackupIcon />
                  Backup online database event: 350
                </LinkRow>
                <LinkRow>
                  <GlobeIcon />
                  Show Cloud Backups
                </LinkRow>
              </CardLinks>
            </Card>

            <Card $gap={14}>
              <CardHead>
                Automatic Database Backup
                <CollapseIcon />
              </CardHead>
              <CardBody>
                <Group $top={1} $pad="10px 0 9px">
                  <GroupTitle>Backup interval in minutes</GroupTitle>
                  <SelectBox>
                    30
                    <DownArrow />
                  </SelectBox>
                </Group>
                <Group $top={6} $pad="10px 0 8px">
                  <GroupTitle>Backup save directory</GroupTitle>
                  <DirRow>
                    <DirInput />
                    <SearchButton>
                      <LensIcon />
                      Search
                    </SearchButton>
                  </DirRow>
                </Group>
                <Notch />
                <StartRow>
                  <BackupIcon />
                  Start automatic backup
                </StartRow>
                <Group $top={2} $pad="9px 0 3px">
                  <GroupTitle>Automatic DB Import</GroupTitle>
                  <ImportBody>
                    <CheckRow>
                      <CheckBox />
                      Enable automatic DB import
                    </CheckRow>
                    {DB_FIELDS.map(field => (
                      <FieldRow key={field.label}>
                        <span>{field.label}</span>
                        <DisabledField>{field.value}</DisabledField>
                      </FieldRow>
                    ))}
                  </ImportBody>
                </Group>
              </CardBody>
            </Card>

            <Card $gap={16}>
              <CardHead>
                Restore Database
                <CollapseIcon />
              </CardHead>
              <HelpText>
                To <b>restore</b> a <b>SQL</b> backup of your database,
                <br />- <b>restart</b> SET
                <br />- select the option <b>Import Database-Backup from SQL file</b> in the
                <br />
                window <b>Database Connection Settings</b>
                <br />- enter a new <b>name</b> for the database to import
                <br />- select the <b>SQL backup file</b> to import.
              </HelpText>
            </Card>
          </BackupBody>
        </Panel>
      </Workspace>

      <StatusBar>2023-08-08 12:40:05:897 [INFO] Sending KeepAliveMsg To Host: www.sportdata.org</StatusBar>

      <Dialog>
        <DialogTitle>
          Save in directory ...
          <CrossIcon />
        </DialogTitle>
        <LookRow>
          <DialogLabel $w={53}>Look In:</DialogLabel>
          <LookCombo>
            <FolderIcon />
            Knowledge Base
            <ComboArrow />
          </LookCombo>
          <DialogTools>
            <DialogTool>
              <UpFolderIcon />
            </DialogTool>
            <DialogTool>
              <SmallHomeIcon />
            </DialogTool>
            <DialogTool>
              <NewFolderIcon />
            </DialogTool>
            <DialogTool $active>
              <GridIcon />
            </DialogTool>
            <DialogTool>
              <ListIcon />
            </DialogTool>
          </DialogTools>
        </LookRow>
        <FileList>
          <FileRow $selected>
            <FolderIcon />
            backup
          </FileRow>
          <FileRow>
            <FolderIcon />
            Flows
          </FileRow>
          <FileRow>
            <FolderIcon />
            images
          </FileRow>
        </FileList>
        <FormRow $top={13}>
          <DialogLabel $w={82}>Folder name:</DialogLabel>
          <FormInput>C:\Users\setuser\Documents\Knowledge Base\backup</FormInput>
        </FormRow>
        <FormRow $top={9}>
          <DialogLabel $w={82}>Files of Type:</DialogLabel>
          <FormInput $round>
            All Files
            <DownArrow />
          </FormInput>
        </FormRow>
        <DialogActions>
          <DialogButton $primary>Open</DialogButton>
          <DialogButton>Cancel</DialogButton>
        </DialogActions>
      </Dialog>

      <Pointer width="175" height="170" viewBox="0 0 175 170">
        <polygon points="12,10 160,65 87,82 69,156" fill="#f28b8b" stroke="#fff" strokeWidth="6" strokeLinejoin="round" paintOrder="stroke" />
      </Pointer>
    </Page>
  )
}
